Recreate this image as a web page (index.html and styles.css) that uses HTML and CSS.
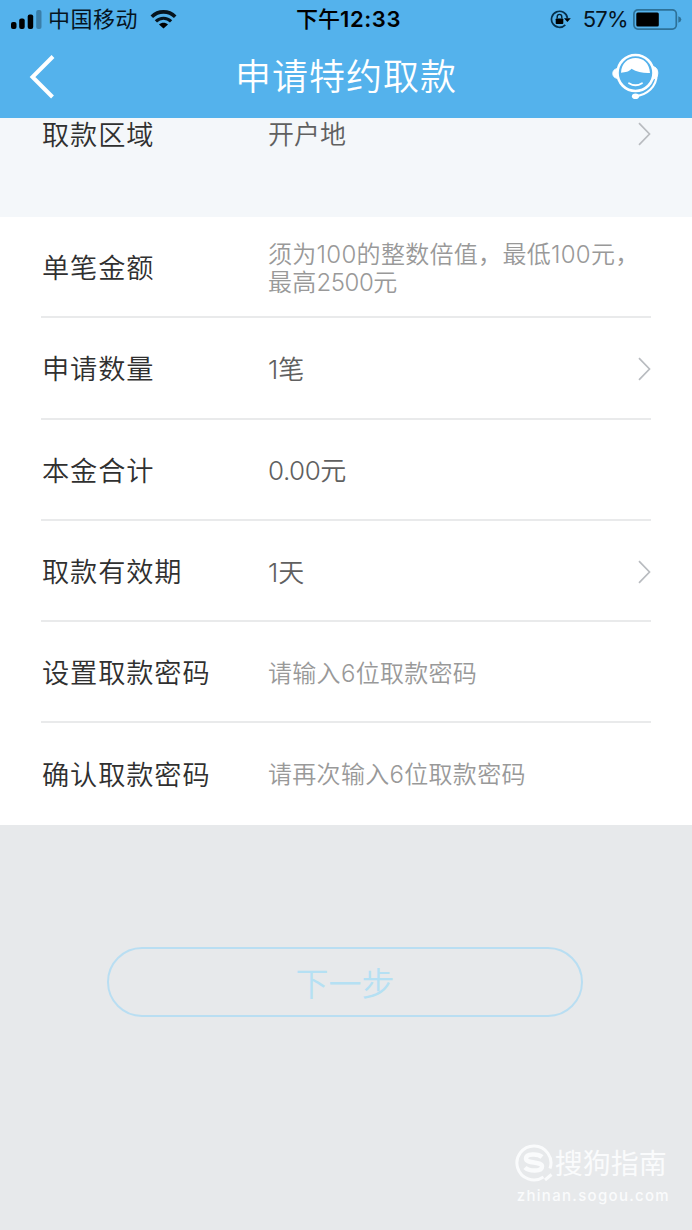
FILE: index.html
```
<!DOCTYPE html>
<html lang="zh-CN">
<head>
    <meta charset="UTF-8">
    <title>申请特约取款</title>
    <link rel="stylesheet" href="styles.css">
</head>
<body>
<div class="app">
    <header class="header">
        <!-- Status bar -->
        <div class="status-bar">
            <div class="status-left">
                <svg class="signal" width="31" height="19" viewBox="0 0 31 19">
                    <rect x="0" y="12" width="5.5" height="7" rx="2"/>
                    <rect x="8.2" y="8.5" width="5.5" height="10.5" rx="2"/>
                    <rect x="16.7" y="4.5" width="5.5" height="14.5" rx="2"/>
                    <rect x="25.2" y="0" width="5.3" height="19" rx="2" fill="#3a7ea9"/>
                </svg>
                <span class="carrier">中国移动</span>
                <svg class="wifi" width="27" height="19" viewBox="0 0 27 19">
                    <path d="M1.8 6.7C8.3 .2 18.7 .2 25.2 6.7" fill="none" stroke="#06141e" stroke-width="3.6"/>
                    <path d="M5.9 11.4C10.2 7.2 16.8 7.2 21.1 11.4" fill="none" stroke="#06141e" stroke-width="3.2"/>
                    <path d="M9 14.6C11.5 12.2 15.5 12.2 18 14.6L13.5 18.6Z"/>
                </svg>
            </div>
            <div class="clock">下午<b>12:33</b></div>
            <div class="status-right">
                <svg class="lock" width="21" height="19" viewBox="0 0 21 19">
                    <path d="M15.3 14.8A8 8 0 1 1 17.4 8" fill="none" stroke="#06304c" stroke-width="1.7"/>
                    <path d="M14 8.2H20.8L17.4 12Z"/>
                    <rect x="5.7" y="8.4" width="7.6" height="5.6" rx=".8"/>
                    <path d="M7.2 8.6V6.7a2.3 2.3 0 0 1 4.6 0V8.6" fill="none" stroke="#06202f" stroke-width="1.4"/>
                </svg>
                <span class="percent">57%</span>
                <svg class="battery" width="49" height="21" viewBox="0 0 49 21">
                    <rect x=".9" y=".9" width="42.4" height="19.2" rx="4" fill="none" stroke="#2d7198" stroke-width="1.7"/>
                    <rect x="3.3" y="3.4" width="22.5" height="14" rx="1.5"/>
                    <path d="M45.3 7.2Q48.3 8.3 48.3 10.5T45.3 13.8Z" fill="#2d7198"/>
                </svg>
            </div>
        </div>
        <!-- Title bar -->
        <div class="nav-bar">
            <svg class="back" width="26" height="44" viewBox="0 0 26 44">
                <path d="M24 1.5L3.5 22L23.5 42" fill="none" stroke="#fff" stroke-width="4"/>
            </svg>
            <h1>申请特约取款</h1>
            <svg class="service" width="47" height="47" viewBox="0 0 47 47">
                <path d="M5.5 15.5Q.8 16.5 .8 20.5T5.5 25.5ZM41 13.5Q45.8 14.5 45.8 20T41 26Z" fill="#fff" stroke="#fff"/>
                <circle cx="23.5" cy="20" r="18" fill="#54b2ec" stroke="#fff" stroke-width="2.6"/>
                <path d="M9 19.7C9.5 10 16 5 23.5 5S37.5 10 38 20C32 20.3 25 19.5 19.5 15.8C17 19 13.5 19 9 19.7Z" fill="#fff"/>
                <path d="M17 30.2Q23.5 34.3 30 30.2" fill="none" stroke="#fff" stroke-width="1.8" stroke-linecap="round"/>
                <path d="M44.6 22C44.5 34 35 41.5 24 43.2" fill="none" stroke="#fff" stroke-width="2.2"/>
                <ellipse cx="23.5" cy="43.2" rx="3.6" ry="2.8" fill="#fff"/>
            </svg>
        </div>
    </header>

    <!-- Region row, half scrolled under the header -->
    <section class="region">
        <div class="row">
            <span class="label">取款区域</span>
            <span class="value">开户地</span>
            <svg class="arrow" width="13" height="24" viewBox="0 0 13 24"><path d="M1 1.2L11.5 12L1 22.8"/></svg>
        </div>
    </section>

    <!-- Withdrawal form -->
    <section class="form">
        <div class="row">
            <span class="label">单笔金额</span>
            <span class="value hint">须为100的整数倍值，最低100元，<br>最高<span class="amount">2500</span>元</span>
        </div>
        <div class="row">
            <span class="label">申请数量</span>
            <span class="value">1笔</span>
            <svg class="arrow" width="13" height="24" viewBox="0 0 13 24"><path d="M1 1.2L11.5 12L1 22.8"/></svg>
        </div>
        <div class="row">
            <span class="label">本金合计</span>
            <span class="value"><span class="amount">0.00</span>元</span>
        </div>
        <div class="row">
            <span class="label">取款有效期</span>
            <span class="value">1天</span>
            <svg class="arrow" width="13" height="24" viewBox="0 0 13 24"><path d="M1 1.2L11.5 12L1 22.8"/></svg>
        </div>
        <div class="row">
            <span class="label">设置取款密码</span>
            <span class="value hint">请输入6位取款密码</span>
        </div>
        <div class="row">
            <span class="label">确认取款密码</span>
            <span class="value hint">请再次输入6位取款密码</span>
        </div>
    </section>

    <div class="actions">
        <button class="next">下一步</button>
    </div>

    <footer class="watermark">
        <div class="brand">
            <svg width="38" height="38" viewBox="0 0 38 38">
                <path d="M28.5 33A17 17 0 1 1 35 24.5" fill="none" stroke="#fafbfc" stroke-width="3"/>
                <path d="M27 13C23 9.5 11 9.5 11 14.5C11 20 27 17 27 22.5C27 28 14 27.5 10 23.5" fill="none" stroke="#fafbfc" stroke-width="4.5"/>
                <path d="M30 36L36.5 30.5" stroke="#fafbfc" stroke-width="3"/>
            </svg>
            <span>搜狗指南</span>
        </div>
        <div class="site">zhinan.sogou.com</div>
    </footer>
</div>
</body>
</html>
```
FILE: styles.css
```
/* Body styles */
body {
    margin: 0;
    font-family: Inter, "Noto Sans CJK SC", sans-serif;
    background-color: #e7e9eb;
}

.app {
    display: flex;
    flex-direction: column;
    height: 1230px;
    overflow: hidden;
}

svg {
    display: block;
    flex: none;
}

/* Header styles */
.header {
    height: 118px;
    background-color: #54b2ec;
}

.status-bar {
    display: grid;
    grid-template-columns: 1fr auto 1fr;
    align-items: center;
    height: 38px;
    padding: 0 10px 0 11px;
    font-size: 22px;
    line-height: 38px;
    color: #06141e;
}

.status-left,
.status-right {
    display: flex;
    align-items: center;
}

.status-right {
    justify-content: flex-end;
}

.carrier {
    margin: 0 12px 0 6px;
    letter-spacing: 0.5px;
}

.clock {
    padding-left: 4px;
    font-weight: 500;
    color: #000;
}

.clock b {
    font-weight: 600;
    letter-spacing: 0.6px;
}

.percent {
    margin: 0 5px 0 12px;
    letter-spacing: -0.7px;
}

.nav-bar {
    display: grid;
    grid-template-columns: 1fr auto 1fr;
    align-items: center;
    height: 78px;
    padding: 0 33px 0 29px;
}

.nav-bar h1 {
    margin: 0;
    padding-left: 4px;
    font-size: 36px;
    font-weight: 350;
    line-height: 78px;
    letter-spacing: 1px;
    color: #fff;
}

.service {
    justify-self: end;
    margin-bottom: 2px;
}

/* Row styles */
.row {
    display: flex;
    align-items: center;
    box-sizing: border-box;
    height: 101.3px;
    margin: 0 41px;
    border-bottom: 2px solid #e9eaeb;
}

.row:last-child {
    border-bottom-color: transparent;
}

.label {
    width: 226px;
    padding: 5px 0 0 1px;
    font-size: 27.2px;
    line-height: 32px;
    letter-spacing: 0.9px;
    font-weight: 350;
    color: #303030;
}

.value {
    flex: 1;
    padding-top: 4px;
    font-size: 26px;
    line-height: 32px;
    font-weight: 350;
    color: #606060;
    white-space: nowrap;
}

.hint {
    font-size: 24px;
    line-height: 28px;
    letter-spacing: 0.3px;
    color: #999;
}

.amount {
    letter-spacing: -0.5px;
}

.arrow {
    margin-top: 2px;
}

.arrow path {
    fill: none;
    stroke: #b9bcc0;
    stroke-width: 1.7;
}

.region {
    height: 99px;
    background-color: #f4f7fa;
}

.region .row {
    height: 30px;
    border-bottom: none;
}

.form {
    height: 608px;
    background-color: #fff;
}

/* Button styles */
.actions {
    padding: 122px 109px 0 107px;
}

.next {
    display: block;
    width: 100%;
    height: 70px;
    border: 2px solid #b9def2;
    border-radius: 35px;
    background: none;
    font-family: inherit;
    font-size: 33px;
    font-weight: 350;
    color: #b5e0f3;
}

/* Watermark styles */
.watermark {
    margin: auto 22px 23px auto;
    color: #fafbfc;
}

.brand {
    display: flex;
    align-items: center;
    gap: 2px;
    margin-left: -2px;
    font-size: 28px;
    line-height: 38px;
}

.brand span {
    padding-top: 3px;
}

.site {
    margin-top: 2px;
    font-size: 15px;
    line-height: 22px;
    letter-spacing: 1.3px;
    font-weight: 500;
}
```
